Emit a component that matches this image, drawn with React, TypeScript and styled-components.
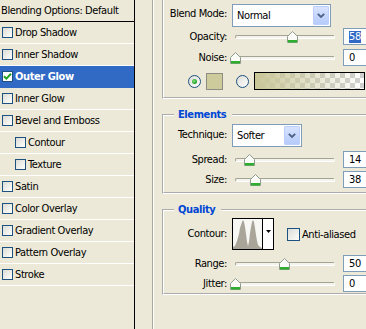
import React from 'react';
import styled, { createGlobalStyle } from 'styled-components';

const GlobalStyle = createGlobalStyle`
  html, body { margin: 0; padding: 0; background: #ece9d8; }
  body {
    font-family: Tahoma, "DejaVu Sans Condensed", "Liberation Sans", Arial, sans-serif;
    font-size: 11px;
    letter-spacing: -0.4px;
    color: #000;
  }
  * { box-sizing: border-box; }
`;

const Screen = styled.div`
  width: 366px;
  height: 329px;
  overflow: hidden;
  display: flex;
  background: #ece9d8;
`;

/* ---------- left list ---------- */
const StyleList = styled.div`
  flex: 0 0 135px;
  border-right: 1px solid #000;
  display: flex;
  flex-direction: column;
`;

const ListHeader = styled.div`
  height: 22px;
  border-bottom: 1px solid #000;
  display: flex;
  align-items: center;
  padding-left: 1px;
  white-space: nowrap;
`;

const StyleRow = styled.div<{ $selected?: boolean; $indent?: boolean }>`
  height: 22px;
  border-bottom: 1px solid ${(p) => (p.$selected ? '#316ac5' : '#fff')};
  background: ${(p) => (p.$selected ? '#316ac5' : 'transparent')};
  color: ${(p) => (p.$selected ? '#fff' : '#000')};
  font-weight: ${(p) => (p.$selected ? 'bold' : 'normal')};
  display: flex;
  align-items: center;
  gap: 2px;
  padding-left: ${(p) => (p.$indent ? 15 : 2)}px;
  white-space: nowrap;
`;

const CheckBox = styled.span<{ $size: number }>`
  flex: 0 0 auto;
  width: ${(p) => p.$size}px;
  height: ${(p) => p.$size}px;
  border: 1px solid #1c5180;
  background: linear-gradient(135deg, #dcdcd7 0%, #f4f4f0 70%, #ffffff 100%);
  display: flex;
  align-items: center;
  justify-content: center;
`;

const CheckedBox = styled(CheckBox)`
  background: #fff;
`;

/* ---------- right side ---------- */
const Gutter = styled.div`
  flex: 0 0 17px;
`;

const Divider = styled.div`
  flex: 0 0 2px;
  border-left: 1px solid #aca899;
  border-right: 1px solid #fff;
`;

const Panel = styled.div`
  flex: 1 1 auto;
  min-width: 0;
  padding-left: 8px;
  display: flex;
  flex-direction: column;
`;

const Group = styled.fieldset<{ $cut?: boolean; $mt?: number }>`
  flex: 0 0 auto;
  width: 240px;
  min-inline-size: 0;
  margin: ${(p) => p.$mt ?? 0}px 0 0 0;
  padding: 0;
  border: 2px groove #fff;
  ${(p) => (p.$cut ? 'border-top: none;' : '')}
`;

const Legend = styled.legend`
  margin-left: 10px;
  padding: 0 6px 0 4px;
  color: #0046d5;
  font-weight: bold;
  line-height: 14px;
`;

const GroupBody = styled.div<{ $pb: number }>`
  display: flex;
  flex-direction: column;
  padding-bottom: ${(p) => p.$pb}px;
`;

const FieldRow = styled.div<{ $mt: number; $h: number; $align?: string }>`
  display: flex;
  align-items: ${(p) => p.$align ?? 'center'};
  margin-top: ${(p) => p.$mt}px;
  height: ${(p) => p.$h}px;
  white-space: nowrap;
`;

const FieldLabel = styled.span<{ $pt?: number }>`
  flex: 0 0 63px;
  text-align: right;
  line-height: 14px;
  padding-top: ${(p) => p.$pt ?? 0}px;
`;

const Combo = styled.div<{ $w: number }>`
  margin-left: 5px;
  width: ${(p) => p.$w}px;
  height: 100%;
  border: 1px solid #7f9db9;
  background: #fff;
  display: flex;
  align-items: stretch;
  padding: 1px;
`;

const ComboText = styled.span`
  flex: 1 1 auto;
  display: flex;
  align-items: center;
  padding-left: 3px;
`;

const ComboButton = styled.span`
  flex: 0 0 16px;
  border: 1px solid #bccffa;
  border-radius: 1px;
  background: linear-gradient(#d7e3fe, #b6cbfa);
  display: flex;
  align-items: center;
  justify-content: center;
`;

const Track = styled.div`
  position: relative;
  margin-left: 8px;
  flex: 0 0 100px;
  height: 4px;
  border: 1px solid;
  border-color: #a5a391 #fff #fff #a5a391;
  border-radius: 2px;
  background: #f4f3ee;
`;

const Thumb = styled.svg`
  position: absolute;
  top: -5px;
  display: block;
`;

const NumberBox = styled.div`
  margin-left: 8px;
  flex: 0 0 44px;
  height: 100%;
  border: 1px solid #7f9db9;
  background: #fff;
  display: flex;
  align-items: center;
  padding-left: 5px;
`;

const Selection = styled.span`
  background: #316ac5;
  color: #fff;
  line-height: 12px;
`;

const RadioRow = styled(FieldRow)`
  padding-left: 24px;
`;

const Radio = styled.span<{ $ml?: number }>`
  flex: 0 0 13px;
  height: 13px;
  margin-left: ${(p) => p.$ml ?? 0}px;
  border-radius: 50%;
  border: 1px solid #1c5180;
  background: linear-gradient(135deg, #dcdcd7, #ffffff);
  display: flex;
  align-items: center;
  justify-content: center;
`;

const RadioDot = styled.span`
  width: 5px;
  height: 5px;
  border-radius: 50%;
  background: radial-gradient(circle at 40% 40%, #7ee07e, #21a121 70%);
`;

const Swatch = styled.span`
  margin-left: 5px;
  flex: 0 0 17px;
  height: 17px;
  border: 1px solid #8c8c84;
  background: #cdcb9b;
`;

const GradientBar = styled.span`
  margin-left: 5px;
  flex: 0 0 111px;
  height: 18px;
  border: 1px solid #000;
  background:
    linear-gradient(to right, rgba(201, 199, 152, 1), rgba(201, 199, 152, 0)),
    repeating-conic-gradient(#d0d0d0 0% 25%, #ffffff 0% 50%) 0 0 / 10px 10px;
`;

const ContourPicker = styled.div`
  margin-left: 5px;
  flex: 0 0 42px;
  height: 32px;
  border: 1px solid #000;
  display: flex;
  background: #fff;
`;

const ContourPreview = styled.span`
  flex: 0 0 30px;
  border-right: 1px solid #000;
  background: #f7f7f4;
  display: flex;
  align-items: flex-end;
`;

const ContourArrow = styled.span`
  flex: 1 1 auto;
  display: flex;
  justify-content: center;
  padding-top: 11px;
`;

const CheckLabel = styled.span`
  margin-left: 13px;
  display: flex;
  align-items: center;
  gap: 2px;
`;

/* ---------- pieces ---------- */
const Check = () => (
  <svg width="9" height="9" viewBox="0 0 9 9">
    <path d="M1 4.2 L3.4 6.6 L8 1.8" fill="none" stroke="#21a121" strokeWidth="2" />
  </svg>
);

const Chevron = () => (
  <svg width="8" height="5" viewBox="0 0 8 5">
    <path d="M0.8 0.8 L4 4 L7.2 0.8" fill="none" stroke="#4d6185" strokeWidth="1.8" />
  </svg>
);

const Slider = ({ value }: { value: number }) => (
  <Track>
    <Thumb width="11" height="12" viewBox="0 0 11 12" style={{ left: `calc(${value}% - 6px)` }}>
      <path d="M0.5 5.5 L5.5 0.5 L10.5 5.5 L10.5 11.5 L0.5 11.5 Z" fill="#fbfbf8" stroke="#8f9c8f" />
      <rect x="1" y="9" width="9" height="2.5" fill="#2eae2e" />
    </Thumb>
  </Track>
);

const layers: { name: string; indent?: boolean; checked?: boolean }[] = [
  { name: 'Drop Shadow' },
  { name: 'Inner Shadow' },
  { name: 'Outer Glow', checked: true },
  { name: 'Inner Glow' },
  { name: 'Bevel and Emboss' },
  { name: 'Contour', indent: true },
  { name: 'Texture', indent: true },
  { name: 'Satin' },
  { name: 'Color Overlay' },
  { name: 'Gradient Overlay' },
  { name: 'Pattern Overlay' },
  { name: 'Stroke' },
];

export default function App() {
  return (
    <>
      <GlobalStyle />
      <Screen>
        <StyleList>
          <ListHeader>Blending Options: Default</ListHeader>
          {layers.map((l) => (
            <StyleRow key={l.name} $selected={l.checked} $indent={l.indent}>
              {l.checked ? (
                <CheckedBox $size={11}>
                  <Check />
                </CheckedBox>
              ) : (
                <CheckBox $size={11} />
              )}
              <span>{l.name}</span>
            </StyleRow>
          ))}
        </StyleList>
        <Gutter />
        <Divider />
        <Panel>
          <Group $cut>
            <GroupBody $pb={7}>
              <FieldRow $mt={4} $h={23} $align="flex-start">
                <FieldLabel $pt={3}>Blend Mode:</FieldLabel>
                <Combo $w={99}>
                  <ComboText>Normal</ComboText>
                  <ComboButton>
                    <Chevron />
                  </ComboButton>
                </Combo>
              </FieldRow>
              <FieldRow $mt={1} $h={17}>
                <FieldLabel>Opacity:</FieldLabel>
                <Slider value={58} />
                <NumberBox>
                  <Selection>58</Selection>
                </NumberBox>
              </FieldRow>
              <FieldRow $mt={4} $h={17}>
                <FieldLabel>Noise:</FieldLabel>
                <Slider value={0} />
                <NumberBox>0</NumberBox>
              </FieldRow>
              <RadioRow $mt={6} $h={18}>
                <Radio>
                  <RadioDot />
                </Radio>
                <Swatch />
                <Radio $ml={13} />
                <GradientBar />
              </RadioRow>
            </GroupBody>
          </Group>

          <Group $mt={9}>
            <Legend>Elements</Legend>
            <GroupBody $pb={4}>
              <FieldRow $mt={2} $h={23} $align="flex-start">
                <FieldLabel $pt={4}>Technique:</FieldLabel>
                <Combo $w={70}>
                  <ComboText>Softer</ComboText>
                  <ComboButton>
                    <Chevron />
                  </ComboButton>
                </Combo>
              </FieldRow>
              <FieldRow $mt={4} $h={17}>
                <FieldLabel>Spread:</FieldLabel>
                <Slider value={14} />
                <NumberBox>14</NumberBox>
              </FieldRow>
              <FieldRow $mt={3} $h={17}>
                <FieldLabel>Size:</FieldLabel>
                <Slider value={20} />
                <NumberBox>38</NumberBox>
              </FieldRow>
            </GroupBody>
          </Group>

          <Group $mt={9}>
            <Legend>Quality</Legend>
            <GroupBody $pb={1}>
              <FieldRow $mt={1} $h={32}>
                <FieldLabel>Contour:</FieldLabel>
                <ContourPicker>
                  <ContourPreview>
                    <svg width="29" height="30" viewBox="0 0 29 30">
                      <path
                        d="M0 30 L0 28 L2 27 L4 22 L6 15 L7 9 L9 3 L10 1 L11 3 L12 8 L13 15 L14 23 L15 27 L16 23 L17 14 L18 8 L19 3 L20 1 L21 3 L22 9 L23 16 L24 22 L25 26 L27 28 L29 29 L29 30 Z"
                        fill="#a9a699"
                      />
                    </svg>
                  </ContourPreview>
                  <ContourArrow>
                    <svg width="5" height="3" viewBox="0 0 5 3">
                      <path d="M0 0 L5 0 L2.5 3 Z" fill="#000" />
                    </svg>
                  </ContourArrow>
                </ContourPicker>
                <CheckLabel>
                  <CheckBox $size={13} />
                  <span>Anti-aliased</span>
                </CheckLabel>
              </FieldRow>
              <FieldRow $mt={5} $h={17}>
                <FieldLabel>Range:</FieldLabel>
                <Slider value={50} />
                <NumberBox>50</NumberBox>
              </FieldRow>
              <FieldRow $mt={3} $h={17}>
                <FieldLabel>Jitter:</FieldLabel>
                <Slider value={0} />
                <NumberBox>0</NumberBox>
              </FieldRow>
            </GroupBody>
          </Group>
        </Panel>
      </Screen>
    </>
  );
}
